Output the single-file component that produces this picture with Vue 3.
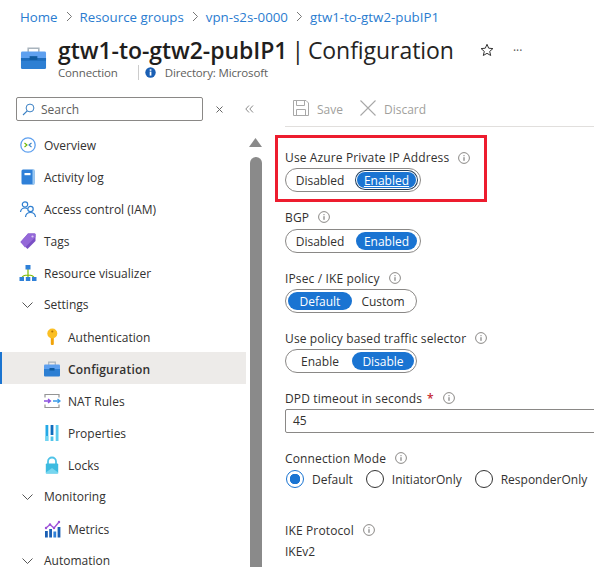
<script setup>
const crumbs = ['Home', 'Resource groups', 'vpn-s2s-0000', 'gtw1-to-gtw2-pubIP1']
const nav = [
  { t: 'Overview', i: 'overview' },
  { t: 'Activity log', i: 'log' },
  { t: 'Access control (IAM)', i: 'iam' },
  { t: 'Tags', i: 'tag' },
  { t: 'Resource visualizer', i: 'viz' },
  { t: 'Settings', group: true },
  { t: 'Authentication', i: 'key', child: true, low: true },
  { t: 'Configuration', i: 'case', child: true, low: true, active: true },
  { t: 'NAT Rules', i: 'nat', child: true, low: true },
  { t: 'Properties', i: 'props', child: true, low: true },
  { t: 'Locks', i: 'lock', child: true, low: true },
  { t: 'Monitoring', group: true, tall: true },
  { t: 'Metrics', i: 'metrics', child: true },
  { t: 'Automation', group: true }
]
</script>

<template>
  <div class="page">
    <nav class="crumbs">
      <template v-for="(c, n) in crumbs" :key="c">
        <svg v-if="n" class="sep" width="7" height="11" viewBox="0 0 7 11"><path d="M1 1l4.500 4.500L1 10" fill="none" stroke="#777" /></svg>
        <a>{{ c }}</a>
      </template>
    </nav>

    <header class="head">
      <svg class="logo" width="27" height="24" viewBox="0 0 28 26" preserveAspectRatio="none">
        <path d="M8.500 7V2.500h11V7" fill="none" stroke="#a9b4bd" stroke-width="1.600" />
        <path d="M1 7.500Q1 6 2.500 6h23Q27 6 27 7.500V13H1z" fill="#5ea0ef" />
        <path d="M1 13h26v10.500q0 1.500-1.500 1.500h-23Q1 25 1 23.500z" fill="#2d7fd3" />
        <path d="M1 13h26v3H1z" fill="#1d6cbc" />
        <rect x="10" y="11" width="8" height="4" fill="#0f5a9e" />
      </svg>
      <div class="head-text">
        <div class="title-row">
          <h1><b>gtw1-to-gtw2-pubIP1</b> | Configuration</h1>
          <svg class="star" width="14" height="14" viewBox="0 0 14 14"><path d="M7 1.300l1.700 3.900 4.200.4-3.200 2.800 1 4.100L7 10.300l-3.700 2.200 1-4.100L1.100 5.600l4.200-.4z" fill="none" stroke="#333" /></svg>
          <span class="dots">···</span>
        </div>
        <div class="meta">
          <span class="conn">Connection</span>
          <svg width="11" height="11" viewBox="0 0 11 11"><circle cx="5.500" cy="5.500" r="5.200" fill="#1a5fb4" /><rect x="4.700" y="4.600" width="1.700" height="4" fill="#fff" /><rect x="4.700" y="2.300" width="1.700" height="1.500" fill="#fff" /></svg>
          <span>Directory: Microsoft</span>
        </div>
      </div>
    </header>

    <div class="main">
      <aside class="side">
        <div class="side-top">
          <div class="search">
            <svg width="13" height="13" viewBox="0 0 13 13"><circle cx="8" cy="5" r="3.900" fill="none" stroke="#3a80c4" /><path d="M5.200 7.800L1 12" stroke="#3a80c4" stroke-width="1.100" /></svg>
            <span>Search</span>
          </div>
          <svg class="tool-x" width="7" height="7" viewBox="0 0 7 7"><path d="M.5.500l6 6m0-6l-6 6" stroke="#666" /></svg>
          <svg class="tool-c" width="9" height="8" viewBox="0 0 9 8"><path d="M4 .5L.8 4 4 7.500M8 .5L4.800 4 8 7.500" fill="none" stroke="#888" /></svg>
        </div>
        <ul class="nav">
          <li v-for="n in nav" :key="n.t" :class="{ child: n.child, low: n.low, active: n.active, group: n.group, tall: n.tall }">
            <svg v-if="n.group" class="chev" width="11" height="6" viewBox="0 0 11 6"><path d="M.5.500l5 5 5-5" fill="none" stroke="#555" /></svg>
            <svg v-else class="ic" width="18" height="18" viewBox="0 0 18 18">
              <template v-if="n.i === 'overview'">
                <circle cx="9" cy="9" r="7.200" fill="#fff" stroke="#5ea0ef" stroke-width="1.300" />
                <path d="M5.500 7l2.500 2-2.500 2" fill="none" stroke="#6bb700" stroke-width="1.100" />
                <path d="M12.500 7L10 9l2.500 2" fill="none" stroke="#3a80c4" stroke-width="1.100" />
              </template>
              <template v-else-if="n.i === 'log'">
                <rect x="2.500" y="1.500" width="13" height="15" rx="1.500" fill="#2f80d8" />
                <rect x="13.500" y="1.500" width="2" height="15" fill="#9cc9f2" />
                <rect x="5.500" y="5" width="6" height="2.200" fill="#fff" />
              </template>
              <template v-else-if="n.i === 'iam'">
                <circle cx="6" cy="4.500" r="2.700" fill="none" stroke="#2f7fd0" stroke-width="1.200" />
                <path d="M1.500 12q.5-4 4.500-4 1.500 0 2.500.8" fill="none" stroke="#2f7fd0" stroke-width="1.200" />
                <circle cx="11.500" cy="9" r="2.700" fill="#fff" stroke="#2f7fd0" stroke-width="1.200" />
                <path d="M6.500 17q.5-4.500 5-4.500t5 4.500" fill="none" stroke="#2f7fd0" stroke-width="1.200" />
              </template>
              <template v-else-if="n.i === 'tag'">
                <path d="M9 1.500h6.500q1 0 1 1V9l-8 8-7-7z" fill="#7a4fc4" />
                <path d="M9 1.500h6.500q1 0 1 1V5L6 15.500 1.500 10z" fill="#9468d8" />
                <circle cx="13.500" cy="4.500" r="1.100" fill="#d9c9f2" />
              </template>
              <template v-else-if="n.i === 'viz'">
                <path d="M9 4v7M3 14.500q0-3.500 6-3.500t6 3.500M9 11v4" fill="none" stroke="#7fba00" stroke-width="1.200" />
                <rect x="6.500" y="1" width="5" height="4.500" fill="#2f80d8" />
                <rect x="0.500" y="13" width="4.500" height="4" fill="#2f80d8" />
                <rect x="6.800" y="13" width="4.500" height="4" fill="#2f80d8" />
                <rect x="13" y="13" width="4.500" height="4" fill="#2f80d8" />
              </template>
              <template v-else-if="n.i === 'key'">
                <rect x="7.800" y="8" width="3" height="9" rx="1" fill="#f0a30a" />
                <circle cx="9.300" cy="5.500" r="5" fill="#fbbf24" />
                <circle cx="9.300" cy="3.500" r="1.100" fill="#b3740a" />
              </template>
              <template v-else-if="n.i === 'case'">
                <path d="M5.700 5V2.200h6.600V5" fill="none" stroke="#a9b4bd" stroke-width="1.200" />
                <path d="M1 5.500q0-1 1-1h14q1 0 1 1V9H1z" fill="#5ea0ef" />
                <path d="M1 9h16v6.500q0 1-1 1H2q-1 0-1-1z" fill="#2d7fd3" />
                <rect x="6.500" y="8" width="5" height="2.500" fill="#0f5a9e" />
              </template>
              <template v-else-if="n.i === 'nat'">
                <path d="M2 5.500V2.500h14v3M2 12.500v3h14v-3" fill="none" stroke="#949494" stroke-width="1.200" />
                <path d="M1 9h6M5 7l2.500 2L5 11" fill="none" stroke="#8a4fe0" stroke-width="1.300" />
                <path d="M10 9h6.500M14.500 7l2.500 2-2.500 2" fill="none" stroke="#3a9be8" stroke-width="1.300" />
              </template>
              <template v-else-if="n.i === 'props'">
                <rect x="2.500" y="1" width="2.800" height="16" fill="#25a9e6" />
                <rect x="2.500" y="12" width="2.800" height="5" fill="#6fd6f2" />
                <rect x="7.600" y="1" width="2.800" height="10" fill="#0f6cbd" />
                <rect x="7.600" y="12.500" width="2.800" height="4.500" fill="#4fc3e8" />
                <rect x="12.700" y="1" width="2.800" height="16" fill="#5ccbee" />
              </template>
              <template v-else-if="n.i === 'lock'">
                <path d="M5 8V5.500a4 4 0 018 0V8" fill="none" stroke="#4fc3e8" stroke-width="1.800" />
                <rect x="2.800" y="7.500" width="12.400" height="10" rx="1" fill="#3dbbe0" />
                <path d="M2.800 16.500L9 12l6.200 4.500v1H2.800z" fill="#76d6ef" />
              </template>
              <template v-else-if="n.i === 'metrics'">
                <rect x="2" y="11" width="2.800" height="6.500" fill="#1a5fb4" />
                <rect x="6.200" y="9" width="2.800" height="8.500" fill="#1a5fb4" />
                <rect x="10.400" y="11.500" width="2.800" height="6" fill="#2f80d8" />
                <rect x="14.600" y="7" width="2.800" height="10.500" fill="#1a5fb4" />
                <path d="M3 8l4-3.500 4 3.500 5-6" fill="none" stroke="#9b4fd8" stroke-width="1.300" />
                <circle cx="3" cy="8" r="1.200" fill="#9b4fd8" /><circle cx="7" cy="4.500" r="1.200" fill="#9b4fd8" /><circle cx="11" cy="8" r="1.200" fill="#9b4fd8" /><circle cx="16" cy="2" r="1.200" fill="#9b4fd8" />
              </template>
            </svg>
            <span>{{ n.t }}</span>
          </li>
        </ul>
      </aside>

      <div class="scroll">
        <svg width="13" height="9" viewBox="0 0 13 9"><path d="M6.500 0l6.500 9H0z" fill="#8a8a8a" /></svg>
        <div class="thumb"></div>
      </div>

      <section class="content">
        <div class="toolbar">
          <span class="tb">
            <svg width="16" height="16" viewBox="0 0 16 16"><path d="M.5.500h12.500l2.500 2.500v12.500H.5z" fill="none" stroke="#a8a8a8" /><path d="M3.500.500v5h8v-5M3.500 15.500v-6h9v6" fill="none" stroke="#a8a8a8" /></svg>
            Save
          </span>
          <span class="tb">
            <svg width="16" height="16" viewBox="0 0 16 16"><path d="M.5.500l15 15m0-15l-15 15" stroke="#a8a8a8" stroke-width="1.100" /></svg>
            Discard
          </span>
        </div>

        <div class="form">
          <div class="redbox"></div>

          <div class="field first">
            <label>Use Azure Private IP Address<svg class="i"><use href="#info" /></svg></label>
            <div class="toggle wide focus"><span>Disabled</span><span class="on">Enabled</span></div>
          </div>

          <div class="field f2 flat">
            <label>BGP<svg class="i"><use href="#info" /></svg></label>
            <div class="toggle wide"><span>Disabled</span><span class="on">Enabled</span></div>
          </div>

          <div class="field f3">
            <label>IPsec / IKE policy<svg class="i"><use href="#info" /></svg></label>
            <div class="toggle narrow"><span class="on">Default</span><span>Custom</span></div>
          </div>

          <div class="field f3">
            <label>Use policy based traffic selector<svg class="i"><use href="#info" /></svg></label>
            <div class="toggle narrow"><span>Enable</span><span class="on">Disable</span></div>
          </div>

          <div class="field f3">
            <label>DPD timeout in seconds<em>*</em><svg class="i"><use href="#info" /></svg></label>
            <div class="input">45</div>
          </div>

          <div class="field f2 flat">
            <label>Connection Mode<svg class="i"><use href="#info" /></svg></label>
            <div class="radios">
              <span class="radio"><i class="dot sel"></i>Default</span>
              <span class="radio"><i class="dot"></i>InitiatorOnly</span>
              <span class="radio"><i class="dot"></i>ResponderOnly</span>
            </div>
          </div>

          <div class="field f5 flat">
            <label>IKE Protocol<svg class="i"><use href="#info" /></svg></label>
            <div class="val">IKEv2</div>
          </div>
        </div>
      </section>
    </div>

    <svg class="defs" width="0" height="0">
      <symbol id="info" viewBox="0 0 12 12">
        <circle cx="6" cy="6" r="5.400" fill="none" stroke="#8a8886" />
        <rect x="5.500" y="5.200" width="1" height="3.600" fill="#666" />
        <rect x="5.500" y="3.200" width="1" height="1" fill="#666" />
      </symbol>
    </svg>
  </div>
</template>

<style>
html, body { margin: 0; background: #fff; overflow: hidden; }
</style>

<style scoped>
.page {
  width: 594px;
  height: 567px;
  overflow: hidden;
  position: relative;
  font-family: "Open Sans", "Noto Sans", sans-serif;
  font-size: 12px;
  color: #323130;
}
.defs { position: absolute; }
.crumbs {
  display: flex;
  align-items: center;
  height: 17px;
  padding: 8px 0 0 20px;
  color: #2a7cd0;
  font-size: 13.300px;
}
.sep { margin: 0 7px 0 8px; flex: none; }
.head { display: flex; margin-top: 8px; height: 64px; }
.logo { margin: 13px 11px 0 20px; flex: none; }
.head-text { display: flex; flex-direction: column; }
.title-row { display: flex; align-items: center; height: 34px; }
h1 { margin: 0; font-size: 23px; font-weight: 400; color: #252423; white-space: nowrap; letter-spacing: -0.05px; word-spacing: -2px; }
h1 b { font-weight: 600; color: #1f1e1d; }
.star { margin-left: 26px; flex: none; }
.dots { margin-left: 19px; color: #555; font-size: 12px; }
.meta { display: flex; align-items: center; height: 16px; margin-top: -3px; font-size: 11.500px; color: #605e5c; letter-spacing: -0.15px; }
.conn { padding-right: 20px; border-right: 1px solid #ccc; margin-right: 6px; }
.meta svg { margin-right: 9px; }
.main { display: flex; height: 470px; }
.side { width: 246px; flex: none; }
.side-top { display: flex; align-items: center; height: 24px; padding-left: 16px; }
.search {
  box-sizing: border-box;
  display: flex;
  align-items: center;
  gap: 6px;
  flex: none;
  width: 187px;
  height: 24px;
  padding-left: 5px;
  border: 1px solid #8a8886;
  border-radius: 2px;
  color: #605e5c;
}
.tool-x { margin-left: 13px; flex: none; }
.tool-c { margin-left: 22px; flex: none; }
.nav { list-style: none; margin: 8px 0 0; padding: 0; }
.nav li {
  display: flex;
  align-items: center;
  height: 32px;
  padding-left: 19px;
  box-sizing: border-box;
  line-height: 14px;
}
.nav li span { margin-top: 2px; }
.nav li.group span { margin-top: 0; }
.nav li .ic { margin-right: 7px; flex: none; }
.nav li.child { padding-left: 43px; }
.nav li.low { padding-top: 2px; }
.nav li.group { height: 31px; padding-left: 22px; }
.nav li.tall { height: 33px; }
.chev { margin-right: 11px; flex: none; }
.nav li.active { background: #edebe9; box-shadow: inset 2px 0 0 #1b74d0; font-weight: 600; letter-spacing: 0.2px; }
.scroll {
  width: 13px;
  flex: none;
  margin-left: 3px;
  padding-top: 41px;
  display: flex;
  flex-direction: column;
  gap: 10px;
}
.thumb { flex: 1; margin-left: 1px; background: #8a8a8a; border-radius: 6px 6px 0 0; }
.content { flex: 1; min-width: 0; }
.toolbar {
  display: flex;
  gap: 17px;
  height: 30px;
  margin-left: 23px;
  padding-left: 8px;
  box-sizing: border-box;
  border-bottom: 1px solid #e1dfdd;
  color: #a19f9d;
}
.tb { display: flex; align-items: flex-start; gap: 8px; line-height: 26px; }
.tb svg { margin-top: 3px; }
.form { position: relative; padding: 21px 0 0 23px; }
.redbox {
  position: absolute;
  left: 13px;
  top: 8px;
  width: 206px;
  height: 61px;
  border: 3px solid #ed1c2e;
}
.field label { display: flex; align-items: center; box-sizing: border-box; height: 17px; padding-top: 1px; white-space: nowrap; letter-spacing: 0.13px; }
.field.first label { padding-top: 2px; }
.field.flat label { height: 16px; padding-top: 0; }
.field label em { color: #c4262e; font-style: normal; font-weight: 600; margin-left: 5px; }
.i { width: 12px; height: 12px; margin-left: 9px; flex: none; }
.f2 { margin-top: 17px; }
.f3 { margin-top: 16px; }
.f5 { margin-top: 34px; }
.toggle {
  box-sizing: border-box;
  display: flex;
  align-items: center;
  height: 24px;
  margin-top: 3px;
  padding: 2px 3px 2px 2px;
  border: 1px solid #8a8886;
  border-radius: 12px;
}
.flat .toggle { margin-top: 4px; }
.wide { width: 136px; }
.narrow { width: 132px; }
.toggle span {
  flex: 1;
  display: flex;
  align-items: center;
  justify-content: center;
  height: 18px;
  border-radius: 9px;
}
.toggle .on { background: #1a74d2; color: #fff; }
.wide span:first-child { flex: 0 0 68px; padding-right: 4px; box-sizing: border-box; }
.narrow span { flex: 0 0 62px; }
.narrow span:first-child { flex: 0 0 64px; }
.focus .on { box-shadow: 0 0 0 1px #fff, 0 0 0 2px #1f3d5c; text-decoration: underline; height: 16px; margin: 0 1px; }
.input {
  box-sizing: border-box;
  height: 24px;
  margin-top: 3px;
  width: 340px;
  padding-left: 7px;
  line-height: 22px;
  border: 1px solid #8a8886;
  border-radius: 2px;
}
.radios { display: flex; margin-top: 4px; height: 18px; align-items: center; }
.radio { display: flex; align-items: center; margin-right: 12px; }
.dot {
  box-sizing: border-box;
  width: 18px;
  height: 18px;
  margin: 0 8px 0 1px;
  border: 1px solid #333;
  border-radius: 50%;
}
.dot.sel { border-color: #1a74d2; background: radial-gradient(circle, #1a74d2 0 5px, #fff 5.500px); }
.val { margin-top: 6px; line-height: 16px; }
</style>
